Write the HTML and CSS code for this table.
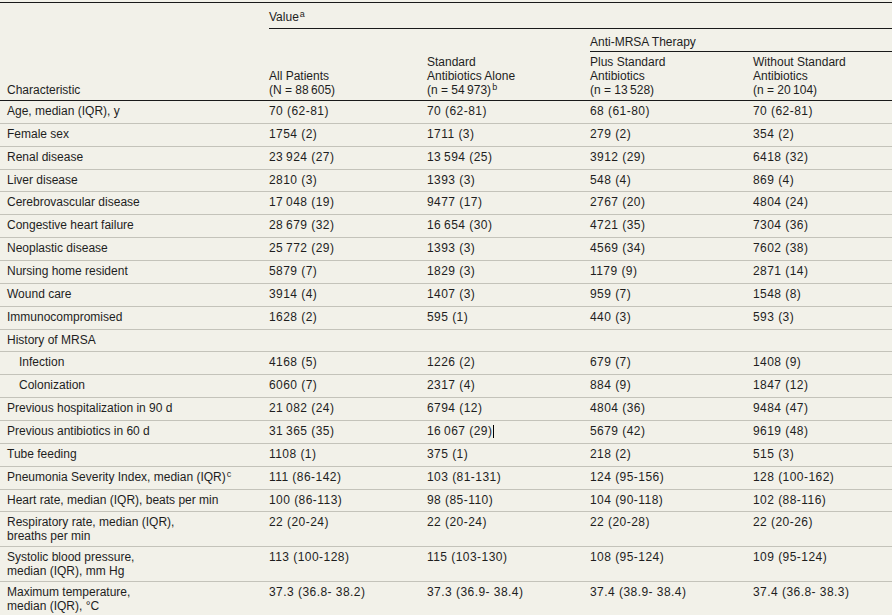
FILE: index.html
```html
<!DOCTYPE html>
<html lang="en">
<head>
<meta charset="utf-8">
<title>Patient characteristics</title>
<link rel="stylesheet" href="styles.css">
</head>
<body>
<table class="tbl">
  <colgroup>
    <col class="c1"><col class="c2"><col class="c3"><col class="c4"><col class="c5">
  </colgroup>
  <thead>
    <tr class="h1">
      <th class="char" rowspan="3">Characteristic</th>
      <th class="span value" colspan="4">Value<sup>a</sup></th>
    </tr>
    <tr class="h2">
      <th class="colh" rowspan="2">All Patients<br>(N = 88&#8201;605)</th>
      <th class="colh" rowspan="2">Standard<br>Antibiotics Alone<br>(n = 54&#8201;973)<sup>b</sup></th>
      <th class="span anti" colspan="2">Anti-MRSA Therapy</th>
    </tr>
    <tr class="h3">
      <th class="colh">Plus Standard<br>Antibiotics<br>(n = 13&#8201;528)</th>
      <th class="colh">Without Standard<br>Antibiotics<br>(n = 20&#8201;104)</th>
    </tr>
  </thead>
  <tbody>
    <tr><td>Age, median (IQR), y</td><td>70 (62-81)</td><td>70 (62-81)</td><td>68 (61-80)</td><td>70 (62-81)</td></tr>
    <tr><td>Female sex</td><td>1754 (2)</td><td>1711 (3)</td><td>279 (2)</td><td>354 (2)</td></tr>
    <tr><td>Renal disease</td><td>23&#8201;924 (27)</td><td>13&#8201;594 (25)</td><td>3912 (29)</td><td>6418 (32)</td></tr>
    <tr><td>Liver disease</td><td>2810 (3)</td><td>1393 (3)</td><td>548 (4)</td><td>869 (4)</td></tr>
    <tr><td>Cerebrovascular disease</td><td>17&#8201;048 (19)</td><td>9477 (17)</td><td>2767 (20)</td><td>4804 (24)</td></tr>
    <tr><td>Congestive heart failure</td><td>28&#8201;679 (32)</td><td>16&#8201;654 (30)</td><td>4721 (35)</td><td>7304 (36)</td></tr>
    <tr><td>Neoplastic disease</td><td>25&#8201;772 (29)</td><td>1393 (3)</td><td>4569 (34)</td><td>7602 (38)</td></tr>
    <tr><td>Nursing home resident</td><td>5879 (7)</td><td>1829 (3)</td><td>1179 (9)</td><td>2871 (14)</td></tr>
    <tr><td>Wound care</td><td>3914 (4)</td><td>1407 (3)</td><td>959 (7)</td><td>1548 (8)</td></tr>
    <tr><td>Immunocompromised</td><td>1628 (2)</td><td>595 (1)</td><td>440 (3)</td><td>593 (3)</td></tr>
    <tr><td>History of MRSA</td><td></td><td></td><td></td><td></td></tr>
    <tr><td class="indent">Infection</td><td>4168 (5)</td><td>1226 (2)</td><td>679 (7)</td><td>1408 (9)</td></tr>
    <tr><td class="indent">Colonization</td><td>6060 (7)</td><td>2317 (4)</td><td>884 (9)</td><td>1847 (12)</td></tr>
    <tr><td>Previous hospitalization in 90 d</td><td>21&#8201;082 (24)</td><td>6794 (12)</td><td>4804 (36)</td><td>9484 (47)</td></tr>
    <tr><td>Previous antibiotics in 60 d</td><td>31&#8201;365 (35)</td><td>16&#8201;067 (29)<span class="caret"></span></td><td>5679 (42)</td><td>9619 (48)</td></tr>
    <tr><td>Tube feeding</td><td>1108 (1)</td><td>375 (1)</td><td>218 (2)</td><td>515 (3)</td></tr>
    <tr><td>Pneumonia Severity Index, median (IQR)<sup>c</sup></td><td>111 (86-142)</td><td>103 (81-131)</td><td>124 (95-156)</td><td>128 (100-162)</td></tr>
    <tr><td>Heart rate, median (IQR), beats per min</td><td>100 (86-113)</td><td>98 (85-110)</td><td>104 (90-118)</td><td>102 (88-116)</td></tr>
    <tr class="two"><td>Respiratory rate, median (IQR),<br>breaths per min</td><td>22 (20-24)</td><td>22 (20-24)</td><td>22 (20-28)</td><td>22 (20-26)</td></tr>
    <tr class="two"><td>Systolic blood pressure,<br>median (IQR), mm Hg</td><td>113 (100-128)</td><td>115 (103-130)</td><td>108 (95-124)</td><td>109 (95-124)</td></tr>
    <tr class="two"><td>Maximum temperature,<br>median (IQR), °C</td><td>37.3 (36.8- 38.2)</td><td>37.3 (36.9- 38.4)</td><td>37.4 (38.9- 38.4)</td><td>37.4 (36.8- 38.3)</td></tr>
  </tbody>
</table>
</body>
</html>
```

FILE: styles.css
```css
html, body {
  margin: 0;
  padding: 0;
  background: #f2f1e9;
}

body {
  font-family: "Liberation Sans", Arial, sans-serif;
  font-size: 12px;
  color: #1e1e1e;
}

.tbl {
  width: 892px;
  margin-top: 2px;
  table-layout: fixed;
  border-collapse: separate;
  border-spacing: 0;
  border-top: 1px solid #1a1a1a;
}

.c1 { width: 269px; }
.c2 { width: 158px; }
.c3 { width: 163px; }
.c4 { width: 163px; }
.c5 { width: 139px; }

.tbl th {
  font-weight: normal;
  text-align: left;
  line-height: 14px;
  padding: 0 6px 0 0;
}

.tbl th.char {
  padding-left: 7px;
  vertical-align: bottom;
  padding-bottom: 3px;
  border-bottom: 1px solid #1a1a1a;
}

.tbl th.value {
  padding-top: 7px;
  padding-bottom: 4px;
  border-bottom: 1px solid #1a1a1a;
}

.tbl th.anti {
  padding-top: 6px;
  padding-bottom: 2px;
  border-bottom: 1px solid #1a1a1a;
}

.tbl th.colh {
  vertical-align: bottom;
  padding-top: 3px;
  padding-bottom: 3px;
  border-bottom: 1px solid #1a1a1a;
}

.tbl tbody tr {
  height: 22.87px;
}

.tbl td {
  line-height: 14px;
  padding: 3px 6px 3px 0;
  vertical-align: top;
  border-bottom: 1px solid #c4c3ba;
  letter-spacing: 0.45px;
  white-space: nowrap;
}

.tbl td:first-child {
  padding-left: 7px;
  letter-spacing: 0;
}

.tbl td.indent {
  padding-left: 19px;
}

sup {
  font-size: 9px;
  line-height: 0;
  vertical-align: baseline;
  position: relative;
  top: -4px;
  margin-left: 1px;
}

.caret {
  display: inline-block;
  width: 1px;
  height: 13px;
  margin-left: 1px;
  background: #000;
  vertical-align: -3px;
}
```
